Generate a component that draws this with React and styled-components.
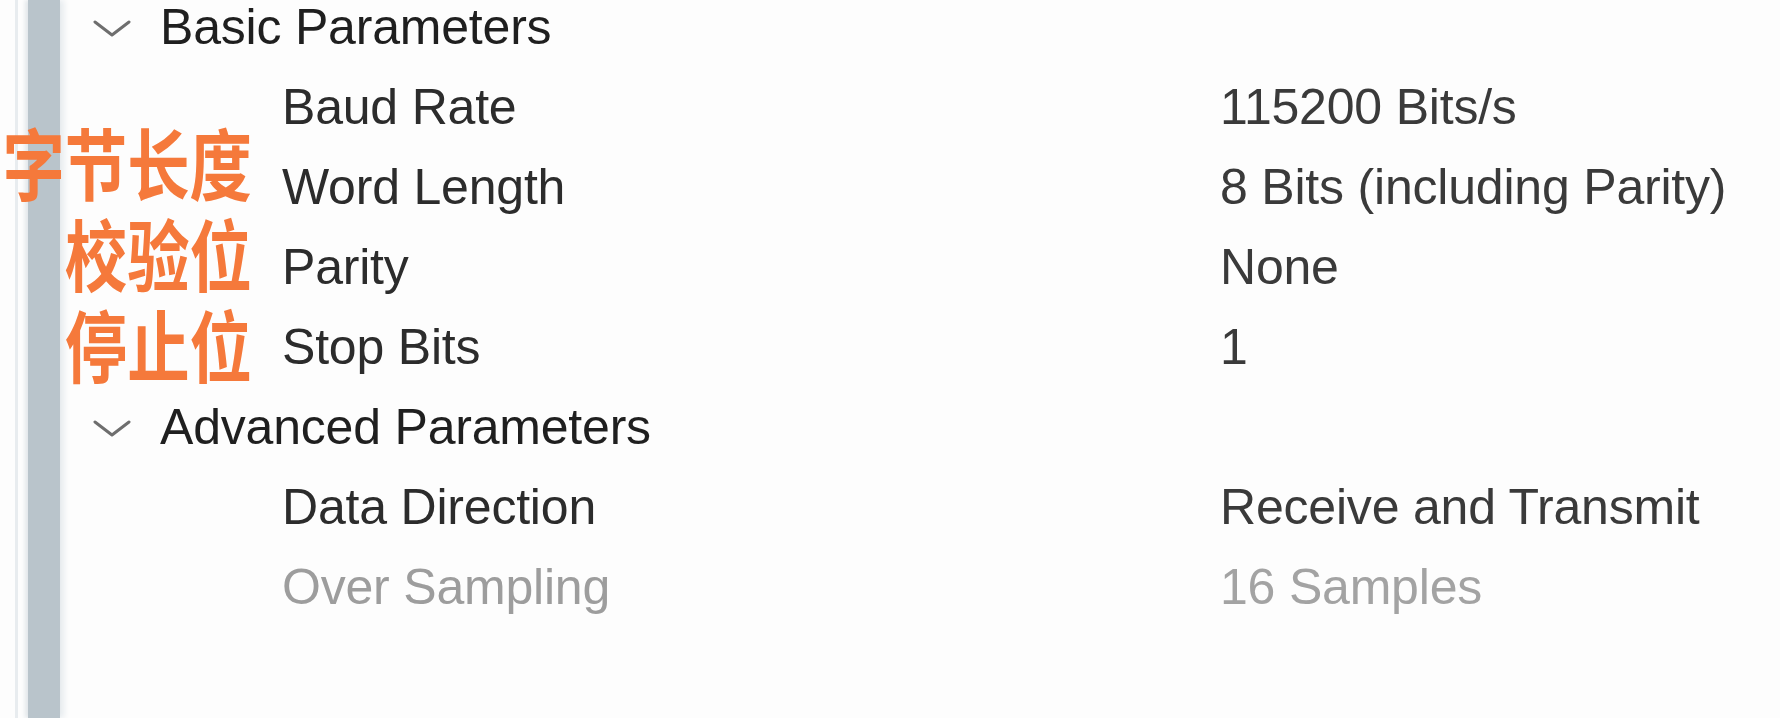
import React from "react";
import styled, { createGlobalStyle } from "styled-components";

const GlobalStyle = createGlobalStyle`
  html, body {
    margin: 0;
    padding: 0;
    background: #fdfdfd;
    overflow: hidden;
  }
`;

const groups = [
  {
    title: "Basic Parameters",
    items: [
      { label: "Baud Rate", value: "115200 Bits/s" },
      { label: "Word Length", value: "8 Bits (including Parity)" },
      { label: "Parity", value: "None" },
      { label: "Stop Bits", value: "1" },
    ],
  },
  {
    title: "Advanced Parameters",
    items: [
      { label: "Data Direction", value: "Receive and Transmit" },
      { label: "Over Sampling", value: "16 Samples", disabled: true },
    ],
  },
];

const notes = ["字节长度", "校验位", "停止位"];

function Chevron() {
  return (
    <ChevronIcon viewBox="0 0 38 20" width="38" height="20">
      <polyline points="2,3 19,16 36,3" />
    </ChevronIcon>
  );
}

function App() {
  return (
    <>
      <GlobalStyle />
      <Page>
        <Rail>
          <RailLine />
          <RailBar />
        </Rail>
        <Tree>
          {groups.map((group) => (
            <Group key={group.title}>
              <GroupHeader>
                <Chevron />
                <GroupTitle>{group.title}</GroupTitle>
              </GroupHeader>
              {group.items.map((item) => (
                <ParamRow key={item.label} $disabled={item.disabled}>
                  <ParamLabel>{item.label}</ParamLabel>
                  <ParamValue>{item.value}</ParamValue>
                </ParamRow>
              ))}
            </Group>
          ))}
        </Tree>
        <Notes>
          {notes.map((note) => (
            <Note key={note}>{note}</Note>
          ))}
        </Notes>
      </Page>
    </>
  );
}

const Page = styled.div`
  position: relative;
  display: flex;
  height: 100vh;
  font-family: "Liberation Sans", Arial, sans-serif;
  font-size: 50px;
  letter-spacing: -0.2px;
`;

const Rail = styled.div`
  display: flex;
  flex-shrink: 0;
  width: 68px;
  padding-left: 15px;
  box-sizing: border-box;
`;

const RailLine = styled.div`
  width: 3px;
  background: #e8ecef;
`;

const RailBar = styled.div`
  width: 32px;
  margin-left: 10px;
  background: #b9c4cb;
  box-shadow: -3px 0 4px #e2e7ea, 4px 0 6px #e6ebee;
`;

const Tree = styled.div`
  display: flex;
  flex-direction: column;
  flex: 1;
  margin-top: -13px;
`;

const Group = styled.div`
  display: flex;
  flex-direction: column;
`;

const GroupHeader = styled.div`
  display: flex;
  align-items: center;
  height: 80px;
  padding-left: 25px;
`;

const ChevronIcon = styled.svg`
  flex-shrink: 0;
  margin-right: 29px;
  margin-top: 3px;
  fill: none;
  stroke: #6e6e6e;
  stroke-width: 3;
  stroke-linecap: round;
  stroke-linejoin: round;
`;

const GroupTitle = styled.span`
  line-height: 80px;
  color: #1f1f1f;
`;

const ParamRow = styled.div`
  display: grid;
  grid-template-columns: 938px auto;
  padding-left: 214px;
  height: 80px;
  line-height: 80px;
  color: ${(p) => (p.$disabled ? "#9d9d9d" : "#2c2c2c")};
`;

const ParamLabel = styled.span`
  white-space: nowrap;
`;

const ParamValue = styled.span`
  white-space: nowrap;
  opacity: 0.93;
`;

const Notes = styled.div`
  position: absolute;
  left: 0;
  top: 116px;
  width: 252px;
  display: flex;
  flex-direction: column;
  align-items: flex-end;
`;

const Note = styled.div`
  font-family: "Noto Sans CJK SC", sans-serif;
  font-weight: 700;
  font-size: 78px;
  line-height: 91px;
  height: 91px;
  letter-spacing: 0;
  color: #f5793b;
  white-space: nowrap;
  transform: scaleX(0.8);
  transform-origin: right center;
`;

export default App;
